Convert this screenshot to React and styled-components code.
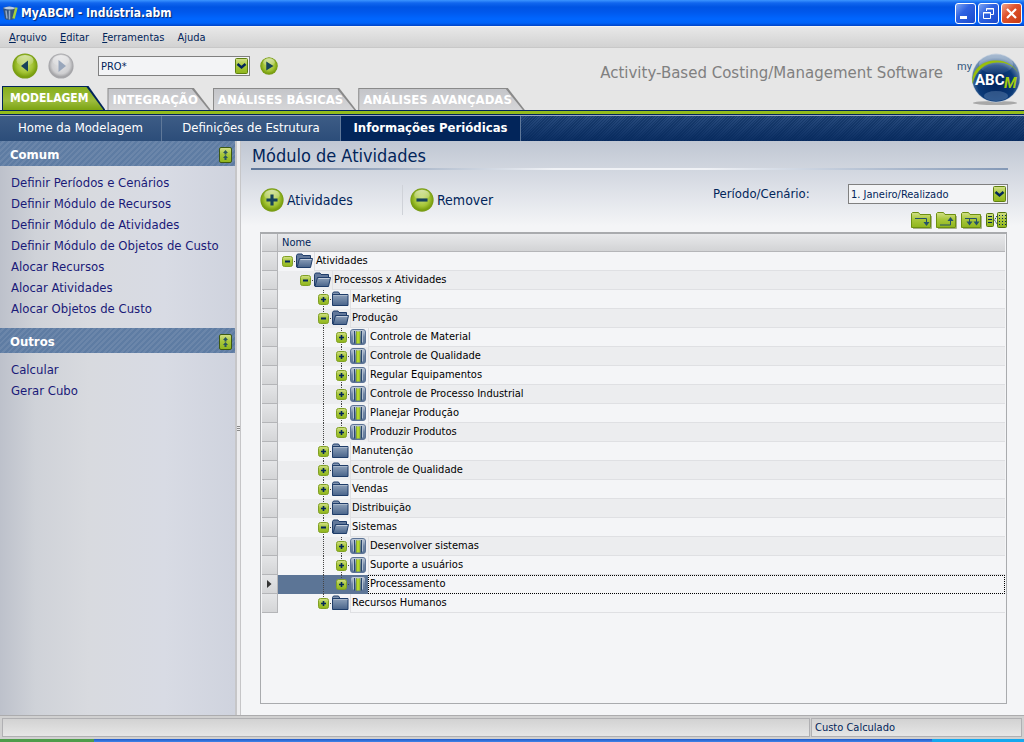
import React from 'react'
import styled, { createGlobalStyle, css } from 'styled-components'

const navy = '#02255a'
const ui = "'DejaVu Sans Condensed', 'DejaVu Sans', sans-serif"
const wide = "'DejaVu Sans', sans-serif"

const rows = [
  { level: 0, kind: 'open', name: 'Atividades' },
  { level: 1, kind: 'open', name: 'Processos x Atividades' },
  { level: 2, kind: 'closed', name: 'Marketing' },
  { level: 2, kind: 'open', name: 'Produção' },
  { level: 3, kind: 'activity', name: 'Controle de Material' },
  { level: 3, kind: 'activity', name: 'Controle de Qualidade' },
  { level: 3, kind: 'activity', name: 'Regular Equipamentos' },
  { level: 3, kind: 'activity', name: 'Controle de Processo Industrial' },
  { level: 3, kind: 'activity', name: 'Planejar Produção' },
  { level: 3, kind: 'activity', name: 'Produzir Produtos', last: true },
  { level: 2, kind: 'closed', name: 'Manutenção' },
  { level: 2, kind: 'closed', name: 'Controle de Qualidade' },
  { level: 2, kind: 'closed', name: 'Vendas' },
  { level: 2, kind: 'closed', name: 'Distribuição' },
  { level: 2, kind: 'open', name: 'Sistemas' },
  { level: 3, kind: 'activity', name: 'Desenvolver sistemas' },
  { level: 3, kind: 'activity', name: 'Suporte a usuários' },
  {
    level: 3,
    kind: 'activity',
    name: 'Processamento',
    last: true,
    selected: true
  },
  { level: 2, kind: 'closed', name: 'Recursos Humanos', last: true }
]

const sections = [
  {
    title: 'Comum',
    links: [
      'Definir Períodos e Cenários',
      'Definir Módulo de Recursos',
      'Definir Módulo de Atividades',
      'Definir Módulo de Objetos de Custo',
      'Alocar Recursos',
      'Alocar Atividades',
      'Alocar Objetos de Custo'
    ]
  },
  { title: 'Outros', links: ['Calcular', 'Gerar Cubo'] }
]

// gradients shared by every icon
function Gradients() {
  return (
    <Defs aria-hidden="true">
      <defs>
        <linearGradient id="green" x1="0" y1="0" x2="0" y2="1">
          <stop offset="0" stopColor="#d3e08a" />
          <stop offset="0.45" stopColor="#a9c83c" />
          <stop offset="1" stopColor="#8fb51c" />
        </linearGradient>
        <linearGradient id="folder" x1="0" y1="0" x2="0" y2="1">
          <stop offset="0" stopColor="#8fa2bb" />
          <stop offset="1" stopColor="#49648a" />
        </linearGradient>
        <linearGradient id="steel" x1="0" y1="0" x2="0" y2="1">
          <stop offset="0" stopColor="#c9d2de" />
          <stop offset="0.5" stopColor="#7187a5" />
          <stop offset="1" stopColor="#5a7396" />
        </linearGradient>
        <radialGradient id="ballGreen" cx="0.5" cy="0.45" r="0.5">
          <stop offset="0" stopColor="#c6dc79" />
          <stop offset="0.65" stopColor="#a3c434" />
          <stop offset="1" stopColor="#7a9f10" />
        </radialGradient>
        <radialGradient id="ballGrey" cx="0.5" cy="0.45" r="0.5">
          <stop offset="0" stopColor="#e4e4e6" />
          <stop offset="0.75" stopColor="#cfcfd1" />
          <stop offset="1" stopColor="#a5a5a8" />
        </radialGradient>
        <radialGradient id="globe" cx="0.5" cy="0.62" r="0.55">
          <stop offset="0" stopColor="#01245c" />
          <stop offset="0.7" stopColor="#0b3a78" />
          <stop offset="1" stopColor="#6b8bb0" />
        </radialGradient>
        <linearGradient id="shine" x1="0" y1="0" x2="0" y2="1">
          <stop offset="0" stopColor="#ffffff" stopOpacity="0.6" />
          <stop offset="1" stopColor="#ffffff" stopOpacity="0.05" />
        </linearGradient>
      </defs>
    </Defs>
  )
}

function Ball({ size, grey, children }) {
  return (
    <svg width={size} height={size} viewBox="0 0 26 26" aria-hidden="true">
      <circle cx="13" cy="13" r="12.6" fill={grey ? '#a9a9ad' : '#7a9c1c'} />
      <circle
        cx="13"
        cy="13"
        r="12"
        fill={grey ? 'url(#ballGrey)' : 'url(#ballGreen)'}
      />
      <ellipse cx="13" cy="7.5" rx="8.5" ry="5.6" fill="url(#shine)" />
      {children}
    </svg>
  )
}

function AppIcon() {
  return (
    <svg width="16" height="16" viewBox="0 0 16 16" aria-hidden="true">
      <path d="M1 3q5-3 13 0l-2 11q-5 2-9 0z" fill="#34547d" />
      <path d="M1 3q6-3 13 0-6 3-13 0z" fill="#b9cbe0" />
      <path d="M4 5.5l1 8M7.5 5.5v9" stroke="#93abc8" strokeWidth="1.5" />
      <path d="M14.5 2.5l-3 11" stroke="#a6d03c" strokeWidth="2.5" />
    </svg>
  )
}

function Logo() {
  return (
    <svg width="64" height="56" viewBox="0 0 64 56" role="img" aria-label="myABCM">
      <ellipse cx="39" cy="51" rx="22" ry="2" fill="#a8a8a8" />
      <circle cx="40" cy="26" r="24.4" fill="#c3cedb" />
      <circle cx="40" cy="26" r="23.8" fill="url(#globe)" />
      <ellipse cx="40" cy="12" rx="17" ry="10" fill="url(#shine)" opacity="0.7" />
      <path
        d="M16.5 32C15 16 28 8 41 8.5c10 .5 17 5 21 12.5C57 13 49 10 41 10.5 29 11 20 18 16.5 32z"
        fill="#98bf0c"
      />
      <ellipse cx="40" cy="44" rx="12" ry="5" fill="#7d9fc4" opacity="0.35" />
      <LogoText x="19" y="33" $size={15} fill="#fff">
        ABC
      </LogoText>
      <LogoText x="48" y="36" $size={15} $slant fill="#a3cb10">
        M
      </LogoText>
      <LogoText x="1" y="18" $size={11} $light fill="#33587f">
        my
      </LogoText>
    </svg>
  )
}

function Toggle({ open, name }) {
  return (
    <ToggleButton aria-label={name} aria-expanded={open}>
      <svg width="12" height="12" viewBox="0 0 12 12" aria-hidden="true">
        <rect
          x="0.5"
          y="0.5"
          width="10"
          height="10"
          rx="2"
          fill="url(#green)"
          stroke="#80a025"
        />
        <path
          d={open ? 'M3 5.5h5' : 'M3 5.5h5M5.5 3v5'}
          stroke={navy}
          strokeWidth={open ? 2 : 1.6}
        />
      </svg>
    </ToggleButton>
  )
}

function NodeIcon({ kind }) {
  if (kind === 'activity') {
    return (
      <svg width="17" height="17" viewBox="0 0 17 17" aria-hidden="true">
        <rect
          x="0.5"
          y="0.5"
          width="15"
          height="15"
          rx="2.5"
          fill="url(#steel)"
          stroke="#5c7396"
        />
        <path d="M4.5 2v12.5M11.5 2v12.5" stroke="#29466f" />
        <path d="M3.5 2.5v11M12.5 2.5v11" stroke="#b3c0d0" />
        <path d="M6 2.5h4v12H6z" fill="#b4d92e" />
        <path d="M6.5 2v13M10 2v13" stroke="#6c8a3a" strokeWidth="0.6" />
      </svg>
    )
  }
  return (
    <svg width="17" height="17" viewBox="0 0 17 17" aria-hidden="true">
      {kind === 'open' ? (
        <>
          <path
            d="M0.5 14V2.5L1.5 1h4.5l1 1.5h7.5V6"
            fill="#62789a"
            stroke="#1f3d6a"
          />
          <path d="M1 14.5L3.5 5.5h13l-2 9z" fill="url(#folder)" stroke="#1f3d6a" />
          <path d="M4.5 6.5h11" stroke="#c3cddb" />
        </>
      ) : (
        <>
          <path d="M0.5 4V2.5L1.5 1h5l1.5 2.5" fill="#8295b0" stroke="#1f3d6a" />
          <path d="M0.5 3.5h15.5v11H0.5z" fill="url(#folder)" stroke="#1f3d6a" />
          <path d="M1.5 4.5h14" stroke="#aab8ca" />
        </>
      )}
    </svg>
  )
}

function FolderAction({ d, heads, label }) {
  return (
    <IconButton aria-label={label}>
      <svg width="21" height="17" viewBox="0 0 21 17" aria-hidden="true">
        <path d="M2 16.5h18.5V4" stroke="#a7b08d" fill="none" />
        <path
          d="M0.5 15.5v-14l1-1h6l1.5 2h10.5v13z"
          fill="url(#green)"
          stroke="#6d9010"
        />
        <path d={d} stroke="#24516b" fill="none" />
        <path d={heads} fill="#24516b" />
      </svg>
    </IconButton>
  )
}

function Dropdown({ id, value, label }) {
  return (
    <SelectBox>
      <Select id={id} aria-label={label} defaultValue={value}>
        <option>{value}</option>
      </Select>
      <svg width="13" height="16" viewBox="0 0 13 16" aria-hidden="true">
        <rect
          x="0.5"
          y="0.5"
          width="12"
          height="15"
          rx="1"
          fill="url(#green)"
          stroke="#5f8010"
        />
        <path
          d="M2.5 6l4 3.5 4-3.5"
          stroke={navy}
          strokeWidth="2.4"
          fill="none"
        />
      </svg>
    </SelectBox>
  )
}

function SideSection({ title, links }) {
  return (
    <section>
      <SideHeader>
        <SideTitle>{title}</SideTitle>
        <IconButton aria-label={`Recolher ${title}`}>
          <svg width="13" height="16" viewBox="0 0 13 16" aria-hidden="true">
            <rect
              x="0.5"
              y="0.5"
              width="12"
              height="15"
              rx="1.5"
              fill="url(#green)"
              stroke="#3f5a12"
            />
            <path
              d="M6.5 3l2.5 3H7.5v1.5h-2V6H4zM6.5 8l2.5 3H7.5v2h-2v-2H4z"
              fill="#2a5560"
            />
          </svg>
        </IconButton>
      </SideHeader>
      <SideList>
        {links.map(link => (
          <li key={link}>
            <SideLink href="#">{link}</SideLink>
          </li>
        ))}
      </SideList>
    </section>
  )
}

function TreeRow({ row, index }) {
  // level 2 is the only ancestor that still has siblings further down
  const guides = Array.from({ length: row.level }, (_, i) => i === 2)
  return (
    <Row $odd={index % 2 === 1} $selected={row.selected}>
      <Gutter>
        {row.selected && (
          <svg width="5" height="8" viewBox="0 0 5 8" aria-hidden="true">
            <path d="M0 0l4.5 4L0 8z" fill="#333" />
          </svg>
        )}
      </Gutter>
      <NameCell>
        <Node>
          {guides.map((line, i) => (
            <Guide key={i} $line={line} />
          ))}
          <ToggleCell $line={row.level > 1} $end={row.last}>
            <Toggle open={row.kind === 'open'} name={row.name} />
          </ToggleCell>
          <NodeIcon kind={row.kind} />
          <Label $selected={row.selected}>{row.name}</Label>
        </Node>
      </NameCell>
    </Row>
  )
}

function App() {
  return (
    <Window>
      <GlobalStyle />
      <Gradients />
      <TitleBar>
        <AppIcon />
        <Title>MyABCM - Indústria.abm</Title>
        <WindowButton aria-label="Minimizar">
          <svg width="19" height="19" viewBox="0 0 19 19" aria-hidden="true">
            <path d="M4 12h7v3H4z" fill="#fff" />
          </svg>
        </WindowButton>
        <WindowButton aria-label="Restaurar">
          <svg width="19" height="19" viewBox="0 0 19 19" aria-hidden="true">
            <path
              d="M7.5 7V4.5h7v6H12M7 5h8M4.5 8.5h7v6h-7zM4 9h8"
              stroke="#fff"
              fill="none"
            />
          </svg>
        </WindowButton>
        <WindowButton aria-label="Fechar" $close>
          <svg width="19" height="19" viewBox="0 0 19 19" aria-hidden="true">
            <path d="M5 5l9 9M14 5l-9 9" stroke="#fff" strokeWidth="2.2" />
          </svg>
        </WindowButton>
      </TitleBar>

      <MenuBar>
        <MenuItem>
          <u>A</u>rquivo
        </MenuItem>
        <MenuItem>
          <u>E</u>ditar
        </MenuItem>
        <MenuItem>
          <u>F</u>erramentas
        </MenuItem>
        <MenuItem>
          A<u>j</u>uda
        </MenuItem>
      </MenuBar>

      <Header>
        <HeaderLeft>
          <Toolbar>
            <IconButton aria-label="Voltar">
              <Ball size={26}>
                <path d="M16 7.5v11L9 13z" fill="#17435a" />
              </Ball>
            </IconButton>
            <IconButton aria-label="Avançar">
              <Ball size={26} grey>
                <path d="M10.5 7v12l7.5-6z" fill="#98a6bb" />
              </Ball>
            </IconButton>
            <SearchWrapper>
              <Dropdown label="Buscar" value="PRO*" />
            </SearchWrapper>
            <IconButton aria-label="Ir">
              <Ball size={18}>
                <path d="M9 6.5v13l10.5-6.5z" fill="#17435a" />
              </Ball>
            </IconButton>
          </Toolbar>
          <Tabs>
            <Tab $active>
              <TabFace $active>MODELAGEM</TabFace>
            </Tab>
            <Tab>
              <TabFace>INTEGRAÇÃO</TabFace>
            </Tab>
            <Tab>
              <TabFace>ANÁLISES BÁSICAS</TabFace>
            </Tab>
            <Tab>
              <TabFace>ANÁLISES AVANÇADAS</TabFace>
            </Tab>
          </Tabs>
        </HeaderLeft>
        <Brand>
          <Tagline>Activity-Based Costing/Management Software</Tagline>
          <Logo />
        </Brand>
      </Header>

      <SubNav>
        <SubLink href="#" $basis={162}>
          Home da Modelagem
        </SubLink>
        <SubLink href="#" $basis={179}>
          Definições de Estrutura
        </SubLink>
        <SubLink href="#" $basis={180} $active>
          Informações Periódicas
        </SubLink>
      </SubNav>

      <Body>
        <Sidebar>
          {sections.map(section => (
            <SideSection key={section.title} {...section} />
          ))}
        </Sidebar>
        <Splitter>
          <Grip />
        </Splitter>
        <Content>
          <Heading>Módulo de Atividades</Heading>
          <Actions>
            <ActionButton>
              <Ball size={24}>
                <path d="M7 13h12M13 7v12" stroke="#17435a" strokeWidth="3.4" />
              </Ball>
              Atividades
            </ActionButton>
            <ActionButton $divided>
              <Ball size={24}>
                <path d="M7 13h12" stroke="#17435a" strokeWidth="3.4" />
              </Ball>
              Remover
            </ActionButton>
            <Period>
              <PeriodLabel htmlFor="periodo">Período/Cenário:</PeriodLabel>
              <PeriodSelect>
                <Dropdown id="periodo" value="1. Janeiro/Realizado" />
              </PeriodSelect>
            </Period>
          </Actions>
          <TreeTools>
            <FolderAction label="Expandir" d="M4 6.5h11.5v5" heads="M12.5 10h6l-3 4z" />
            <FolderAction label="Recolher" d="M4 13h10.5v-5" heads="M11.5 9h6l-3-4z" />
            <FolderAction
              label="Expandir tudo"
              d="M4 6.5h11.5v5M8.5 6.5v5"
              heads="M5.5 9.5h6l-3 4zM12.5 9.5h6l-3 4z"
            />
            <IconButton aria-label="Relacionar">
              <svg width="21" height="17" viewBox="0 0 21 17" aria-hidden="true">
                <rect x="0.5" y="1.5" width="7" height="13" rx="1" fill="url(#green)" stroke="#55760e" />
                <rect x="11.5" y="0.5" width="9" height="15" rx="1" fill="url(#green)" stroke="#55760e" />
                <path d="M2 4.5h4M2 7.5h4M2 10.5h4" stroke={navy} />
                <path
                  d="M13 3.5h7M13 6.5h7M13 9.5h7M13 12.5h7"
                  stroke={navy}
                  strokeDasharray="1 2"
                />
                <path d="M11 4L8.5 8l2.5 4" stroke={navy} fill="none" strokeDasharray="1.5 1" />
              </svg>
            </IconButton>
          </TreeTools>
          <Grid>
            <Table>
              <thead>
                <tr>
                  <HeadCell $gutter aria-label="Seleção" />
                  <HeadCell>Nome</HeadCell>
                </tr>
              </thead>
              <tbody>
                {rows.map((row, index) => (
                  <TreeRow key={index} row={row} index={index} />
                ))}
              </tbody>
            </Table>
          </Grid>
        </Content>
      </Body>

      <StatusBar>
        <StatusCell />
        <StatusCell $basis={211}>Custo Calculado</StatusCell>
      </StatusBar>
      <TaskBar>
        <StartEdge />
        <TrayEdge />
      </TaskBar>
    </Window>
  )
}

const GlobalStyle = createGlobalStyle`
  * {
    box-sizing: border-box;
  }
  body {
    margin: 0;
    color: ${navy};
    font: 11px/15px ${ui};
  }
  button, select {
    margin: 0;
    font: inherit;
    color: inherit;
  }
  a {
    color: inherit;
    text-decoration: none;
  }
  svg {
    display: block;
    flex: none;
  }
`

const Defs = styled.svg`
  position: absolute;
  width: 0;
  height: 0;
`

const LogoText = styled.text`
  font-family: Roboto, sans-serif;
  font-size: ${({ $size }) => $size}px;
  font-weight: ${({ $light }) => ($light ? 400 : 700)};
  font-style: ${({ $slant }) => ($slant ? 'italic' : 'normal')};
`

const Window = styled.div`
  display: flex;
  flex-direction: column;
  min-height: 100vh;
  background: #e6e6e6;
`

const TitleBar = styled.header`
  display: flex;
  align-items: center;
  gap: 2px;
  height: 26px;
  padding: 0 2px;
  background: linear-gradient(
    #3c95ff 0,
    #1166ee 3px,
    #0054e3 7px,
    #0058ec 12px,
    #0066ff 19px,
    #0062f8 23px,
    #0043c6 26px
  );
`

const Title = styled.h1`
  flex: 1;
  margin: 0 1px;
  color: #fff;
  font: bold 12px/16px ${ui};
  text-shadow: 1px 1px 1px #0a246a;
`

const WindowButton = styled.button`
  width: 21px;
  height: 21px;
  padding: 0;
  border: 1px solid #fff;
  border-radius: 3px;
  background: ${({ $close }) =>
    $close
      ? 'linear-gradient(135deg, #f0a58c, #e0532e 40%, #c63a12)'
      : 'linear-gradient(135deg, #7ea6f4, #2f63e2 40%, #1a49cc)'};
`

const MenuBar = styled.nav`
  display: flex;
  gap: 13px;
  height: 22px;
  padding: 0 9px;
  border-top: 1px solid #f4f4f4;
  border-bottom: 1px solid #c8c8c8;
  background: linear-gradient(#e8e8e8, #d2d2d2);
`

const MenuItem = styled.button`
  padding: 0;
  border: 0;
  background: none;
`

const Header = styled.div`
  display: flex;
  justify-content: space-between;
  height: 62px;
`

const HeaderLeft = styled.div`
  display: flex;
  flex-direction: column;
  justify-content: space-between;
`

const Toolbar = styled.div`
  display: flex;
  align-items: center;
  gap: 10px;
  padding: 5px 12px 0;
`

const IconButton = styled.button`
  padding: 0;
  border: 0;
  background: none;
`

const SearchWrapper = styled.div`
  width: 152px;
  margin-left: 14px;
`

const SelectBox = styled.div`
  display: grid;
  align-items: center;
  > * {
    grid-area: 1 / 1;
  }
  > svg {
    justify-self: end;
    margin-right: 2px;
    pointer-events: none;
  }
`

const Select = styled.select`
  width: 100%;
  height: 20px;
  padding: 0 18px 0 2px;
  border: 1px solid #808080;
  border-radius: 0;
  background: #f3f4f6;
  appearance: none;
`

const Tabs = styled.div`
  display: flex;
  align-items: flex-end;
  gap: 2px;
  padding-left: 2px;
`

const slant = css`
  clip-path: polygon(0 0, calc(100% - 17px) 0, 100% 100%, 0 100%);
`

const Tab = styled.button`
  display: flex;
  height: ${({ $active }) => ($active ? 24 : 22)}px;
  padding: 1px 2px 0 1px;
  border: 0;
  background: ${({ $active }) => ($active ? navy : '#8a8a8a')};
  ${slant}
`

const TabFace = styled.span`
  height: 100%;
  padding: ${({ $active }) => ($active ? '0 15px 0 7px' : '0 11px 0 4px')};
  color: #fff;
  font: bold ${({ $active }) => ($active ? 12 : 13)}px/22px ${ui};
  background: ${({ $active }) =>
    $active
      ? 'linear-gradient(#86ae1c, #9cbc3c 60%, #7ba312)'
      : 'linear-gradient(#c4c5c9, #d6d6d8)'};
  ${slant}
`

const Brand = styled.div`
  display: flex;
  align-items: flex-start;
  gap: 13px;
  padding: 4px 4px 0 0;
`

const Tagline = styled.p`
  margin: 11px 0 0;
  color: #808080;
  font: 15px/20px ${wide};
`

const SubNav = styled.nav`
  display: flex;
  height: 31px;
  padding-top: 6px;
  background:
    linear-gradient(
      ${navy} 1px,
      #94bc1c 1px 4px,
      ${navy} 4px 5px,
      #9aa9bf 5px 6px,
      transparent 6px
    ),
    linear-gradient(rgba(2, 37, 90, 0), rgba(2, 37, 90, 0.8)),
    repeating-linear-gradient(135deg, #2f5284 0 1px, #1d4070 1px 2px);
`

const SubLink = styled.a`
  flex: 0 0 ${({ $basis }) => $basis}px;
  border-right: 1px solid #5f7899;
  background: ${({ $active }) =>
    $active ? navy : 'linear-gradient(#3d5c86, #2c4d79)'};
  color: #fff;
  font: ${({ $active }) => ($active ? 'bold' : 'normal')} 13px/24px ${ui};
  text-align: center;
`

const Body = styled.div`
  display: flex;
  flex: 1;
`

const Sidebar = styled.aside`
  width: 235px;
  background: linear-gradient(
    90deg,
    #bdc1cb,
    #cfd2d8 15%,
    #d8dadf 38%,
    #d8dbe4 70%,
    #cfd3de
  );
`

const SideHeader = styled.div`
  display: flex;
  align-items: center;
  justify-content: space-between;
  height: 25px;
  padding: 2px 3px 0 10px;
  background: repeating-linear-gradient(135deg, #5e7ca3 0 2px, #6b86aa 2px 4px);
`

const SideTitle = styled.h2`
  margin: 0;
  color: #fff;
  font: bold 13px/18px ${ui};
`

const SideList = styled.ul`
  margin: 0;
  padding: 6px 11px 9px;
  list-style: none;
`

const SideLink = styled.a`
  color: #1a1a78;
  font: 13px/21px ${ui};
`

const Splitter = styled.div`
  display: flex;
  align-items: center;
  justify-content: center;
  width: 6px;
  border: solid #c6c6c8;
  border-width: 0 1px 0 2px;
  background: #ececee;
`

const Grip = styled.span`
  width: 3px;
  height: 5px;
  background: repeating-linear-gradient(#8a8a8a 0 1px, #ececee 1px 2px);
`

const Content = styled.main`
  display: flex;
  flex: 1;
  flex-direction: column;
  min-width: 0;
  padding: 0 16px 11px 10px;
  background: linear-gradient(#c0c7d3, #d8dce4 40px, #f4f5f7 85px);
`

const Heading = styled.h2`
  margin: 0;
  padding: 5px 1px 2px;
  border-bottom: 2px solid;
  border-image: linear-gradient(90deg, #5c7598, #f0f2f6 40%, #f0f2f6 60%, #8398b6) 1;
  font: 18px/20px ${ui};
`

const Actions = styled.div`
  display: flex;
  align-items: center;
  height: 30px;
  margin: 15px 0 0 9px;
`

const ActionButton = styled.button`
  display: flex;
  align-items: center;
  gap: 3px;
  width: 142px;
  height: 30px;
  padding: 0 0 0 ${({ $divided }) => ($divided ? 7 : 0)}px;
  border: 0;
  border-left: ${({ $divided }) => ($divided ? '1px solid #cfd2d8' : '0')};
  background: none;
  font: 14px/20px ${ui};
`

const Period = styled.div`
  display: flex;
  align-items: center;
  justify-content: space-between;
  width: 295px;
  margin: -12px 0 0 auto;
`

const PeriodLabel = styled.label`
  font: 13px/20px ${ui};
`

const PeriodSelect = styled.div`
  width: 160px;
`

const TreeTools = styled.div`
  display: flex;
  justify-content: flex-end;
  gap: 4px;
  margin: -3px 0 3px;
  padding-right: 1px;
`

const Grid = styled.div`
  flex: 1;
  margin: 0 1px 0 9px;
  border: 1px solid #a9abae;
  border-top-width: 2px;
  padding: 0 1px;
  background: #f4f5f7;
`

const Table = styled.table`
  width: 100%;
  border-collapse: separate;
  border-spacing: 0;
  table-layout: fixed;
`

const HeadCell = styled.th`
  width: ${({ $gutter }) => ($gutter ? '16px' : 'auto')};
  height: 18px;
  padding: 0 4px;
  border-right: ${({ $gutter }) => ($gutter ? '1px solid #b4b5b8' : '0')};
  border-bottom: 1px solid #b4b5b8;
  background: linear-gradient(#e8e9eb, #d2d3d5);
  font-weight: normal;
  line-height: 16px;
  text-align: left;
`

const Gutter = styled.td`
  height: 19px;
  padding: 0 0 0 5px;
  border-right: 1px solid #b4b5b8;
  border-bottom: 1px solid #b4b5b8;
  background: linear-gradient(#e4e5e7, #d4d5d7);
`

const NameCell = styled.td`
  padding: 0 0 0 4px;
`

const Row = styled.tr`
  height: 19px;
  background: ${({ $odd, $selected }) =>
    $selected ? '#5c7596' : $odd ? '#ecedef' : '#f4f5f7'};
`

const Node = styled.div`
  display: flex;
  align-items: center;
  height: 19px;
`

const dots = css`
  background-image: repeating-linear-gradient(#444 0 1px, transparent 1px 2px);
  background-repeat: no-repeat;
  background-position: 5px 0;
`

const Guide = styled.span`
  flex: none;
  width: 18px;
  height: 100%;
  ${({ $line }) => $line && dots}
  background-size: 1px 100%;
`

const ToggleCell = styled.span`
  display: flex;
  align-items: center;
  flex: none;
  width: 14px;
  height: 100%;
  ${({ $line }) => $line && dots}
  background-size: 1px ${({ $end }) => ($end ? '50%' : '100%')};
  &::after {
    content: '';
    width: 1px;
    height: 1px;
    background: #444;
  }
`

const ToggleButton = styled.button`
  padding: 0;
  border: 0;
  background: none;
`

const Label = styled.span`
  flex: 1;
  height: 19px;
  margin-left: 1px;
  padding-left: 1px;
  border-left: 1px solid #dfe0e3;
  border-bottom: 1px solid #dfe0e3;
  color: #000;
  line-height: 18px;
  white-space: nowrap;
  ${({ $selected }) =>
    $selected &&
    css`
      border: 1px dotted #000;
      background: #f4f5f7;
      line-height: 16px;
    `}
`

const StatusBar = styled.footer`
  display: flex;
  gap: 1px;
  height: 24px;
  padding: 2px;
  border-top: 1px solid #acacae;
  background: #d0d0d0;
`

const StatusCell = styled.div`
  flex: ${({ $basis }) => ($basis ? `0 0 ${$basis}px` : '1')};
  padding-left: 3px;
  border: 1px solid #b0b0b3;
  background: linear-gradient(#d2d2d2, #e6e6e6);
  line-height: 17px;
`

const TaskBar = styled.div`
  display: flex;
  justify-content: space-between;
  height: 3px;
  background: linear-gradient(#2258c8, #3f86e8);
`

const StartEdge = styled.span`
  width: 94px;
  background: #4e9c4a;
`

const TrayEdge = styled.span`
  width: 92px;
  background: #15a8ee;
`

export default App
